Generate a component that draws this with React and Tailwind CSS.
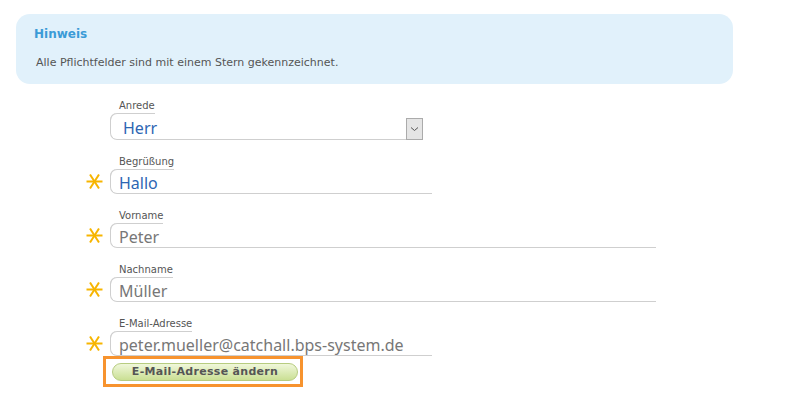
import React from "react";

const Star = () => (
  <svg width="17" height="17" viewBox="0 0 17 17" className="shrink-0">
    <g stroke="#f7b500" strokeWidth="2" strokeLinecap="butt">
      <line x1="0.5" y1="8.5" x2="16.5" y2="8.5" />
      <line x1="4" y1="1.5" x2="13" y2="15.5" />
      <line x1="13" y1="1.5" x2="4" y2="15.5" />
    </g>
  </svg>
);

function Field({ label, value, width, required, blue, select }) {
  return (
    <div className="flex items-end">
      <div className="w-[24px] flex justify-start pb-[4px]">{required ? <Star /> : null}</div>
      <div className="flex flex-col" style={{ width }}>
        <div className="relative w-fit pl-[9px] text-[10px] leading-[12px] text-[#555] mb-[1px]">
          {label}
          <span className="pointer-events-none absolute left-0 right-0 top-[13px] h-[10px] border-l border-t border-[#cfcfcf] rounded-tl-[7px]" />
        </div>
        <div
          className={
            "relative flex items-center border-b border-l border-[#cfcfcf] rounded-bl-[7px] rounded-tl-[7px] " +
            (select ? "h-[27px]" : "h-[25px]")
          }
        >
          <span
            className={
              "mt-[3px] text-[16px] leading-[20px] " +
              (select ? "pl-[12px] " : "pl-[8px] ") +
              (blue ? "text-[#2d66b3]" : "text-[#777]")
            }
            style={{ fontFamily: '"Noto Sans", "Open Sans", sans-serif' }}
          >
            {value}
          </span>
          {select ? (
            <div className="ml-auto mb-[-1px] self-end flex h-[22px] w-[17px] items-center justify-center border border-[#ababab] bg-[#e5e5e5]">
              <svg width="9" height="6" viewBox="0 0 9 6">
                <path d="M1 1.5 L4.5 4.5 L8 1.5" fill="none" stroke="#555" strokeWidth="1" />
              </svg>
            </div>
          ) : null}
        </div>
      </div>
    </div>
  );
}

export default function App() {
  return (
    <div
      className="w-[802px] h-[395px] bg-white overflow-hidden"
      style={{ fontFamily: '"DejaVu Sans", Verdana, sans-serif' }}
    >
      <div className="pt-[14px] pl-[16px]">
        <div className="w-[717px] h-[70px] rounded-[14px] bg-[#e1f1fb] pl-[18px] pt-[13px]">
          <div className="text-[12px] font-bold leading-[15px] text-[#3b9bd7]">Hinweis</div>
          <div className="mt-[14px] pl-[2px] text-[11px] leading-[13px] text-[#555]">
            Alle Pflichtfelder sind mit einem Stern gekennzeichnet.
          </div>
        </div>
      </div>
      <div className="pl-[86px] pt-[16px] flex flex-col gap-[16px]">
        <Field label="Anrede" value="Herr" width={313} blue select />
        <Field label="Begrüßung" value="Hallo" width={322} blue required />
        <Field label="Vorname" value="Peter" width={546} required />
        <Field label="Nachname" value="Müller" width={546} required />
        <div className="flex flex-col">
          <Field label="E-Mail-Adresse" value="peter.mueller@catchall.bps-system.de" width={322} required />
          <div className="ml-[17px] mt-0 w-[200px] h-[31px] border-[3px] border-[#f7932e] flex items-center pl-[6px]">
            <button className="h-[18px] w-[186px] rounded-full border border-[#b7cc80] bg-gradient-to-b from-[#f0f7da] to-[#cadf93] text-[11px] font-bold leading-[14px] text-[#555] tracking-[0.3px]">
              E-Mail-Adresse ändern
            </button>
          </div>
        </div>
      </div>
    </div>
  );
}
